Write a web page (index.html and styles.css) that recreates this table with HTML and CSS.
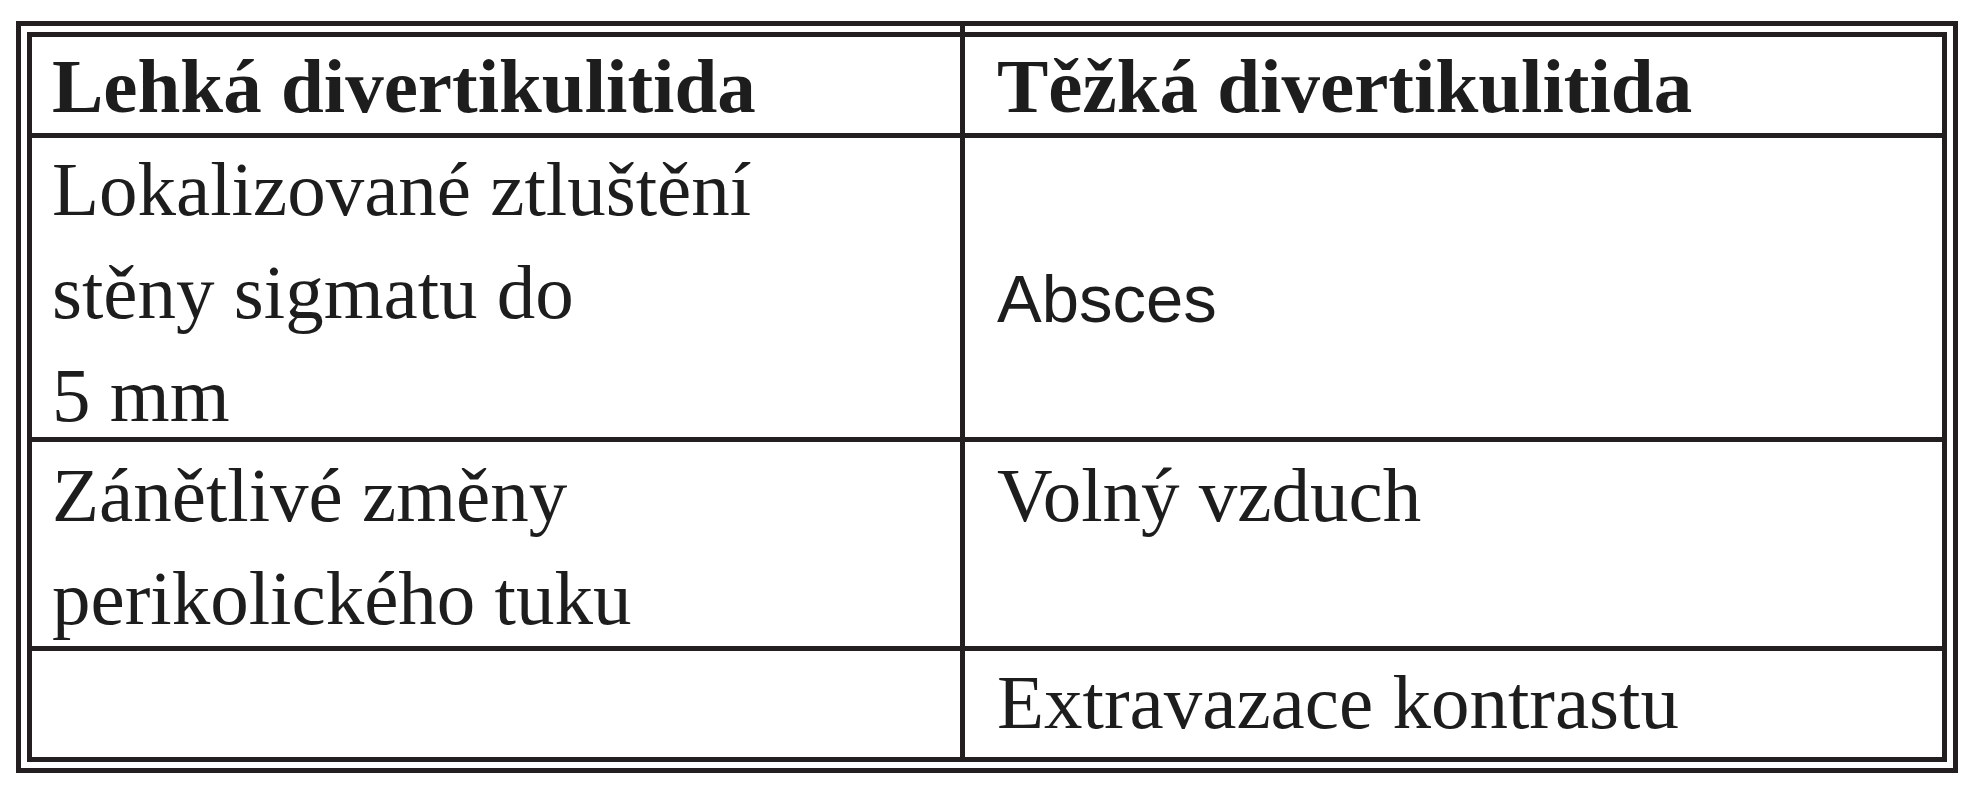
FILE: index.html
```html
<!DOCTYPE html>
<html lang="cs">
<head>
<meta charset="utf-8">
<title>Divertikulitida</title>
<link rel="stylesheet" href="styles.css">
</head>
<body>
<div class="frame">
  <div class="grid">
    <div class="cell c1 head">Lehká divertikulitida</div>
    <div class="cell c2 head">Těžká divertikulitida</div>
    <div class="cell c1">Lokalizované ztluštění<br>stěny sigmatu do<br>5 mm</div>
    <div class="cell c2 middle"><span class="sans">Absces</span></div>
    <div class="cell c1 r3">Zánětlivé změny<br>perikolického tuku</div>
    <div class="cell c2 r3">Volný vzduch</div>
    <div class="cell c1"></div>
    <div class="cell c2">Extravazace kontrastu</div>
  </div>
</div>
</body>
</html>
```

FILE: styles.css
```css
html, body {
  margin: 0;
  padding: 0;
  background: #ffffff;
}

body {
  font-family: "Liberation Serif", "Times New Roman", serif;
  color: #1d1d1d;
}

.frame {
  position: relative;
  box-sizing: border-box;
  width: 1942px;
  height: 752px;
  margin: 21px 0 0 16px;
  border: 5px solid #231f20;
  padding: 6px;
}

/* column divider crossing the gap between the two frames at the top */
.frame::before {
  content: "";
  position: absolute;
  left: 939px;
  top: 0;
  width: 5px;
  height: 6px;
  background: #231f20;
}

.grid {
  box-sizing: border-box;
  width: 1920px;
  height: 730px;
  background: #231f20;
  padding: 5px;
  display: grid;
  grid-template-columns: 928px 977px;
  grid-template-rows: 96px 299px 204px 106px;
  gap: 5px;
}

.cell {
  background: #ffffff;
  font-size: 77px;
  line-height: 103px;
  white-space: nowrap;
  overflow: visible;
}

.c1 {
  padding-left: 20px;
}

.c2 {
  padding-left: 32px;
}

.head {
  font-weight: bold;
  line-height: 96px;
  padding-top: 1px;
}

.r3 {
  padding-top: 2px;
}

.middle {
  padding-top: 107px;
}

.sans {
  font-family: "Liberation Sans", Arial, sans-serif;
  font-size: 67px;
}
```
